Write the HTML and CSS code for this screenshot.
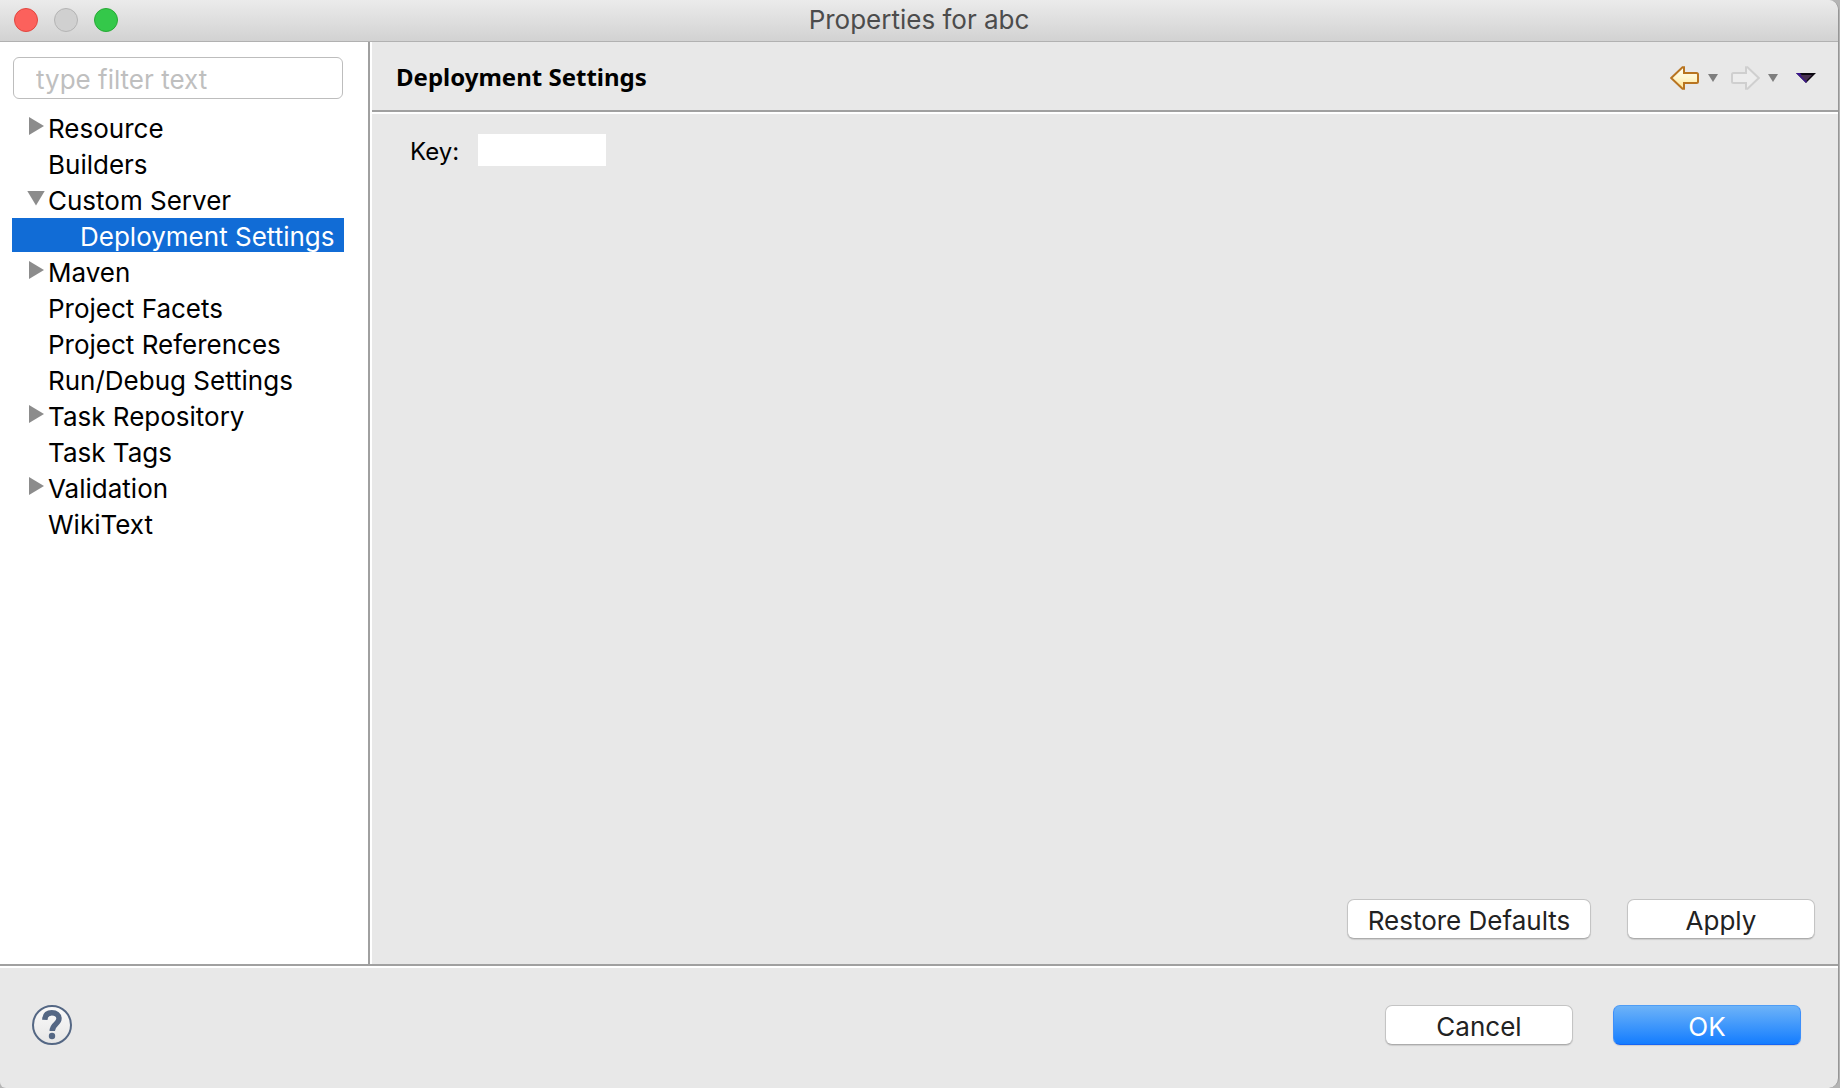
FILE: index.html
```html
<!DOCTYPE html>
<html lang="en">
<head>
<meta charset="utf-8">
<title>Properties for abc</title>
<link rel="stylesheet" href="styles.css">
</head>
<body>
<div class="window">
  <header class="titlebar">
    <div class="lights">
      <button class="light light-close" type="button" aria-label="Close"></button>
      <button class="light light-minimize" type="button" aria-label="Minimize" disabled></button>
      <button class="light light-zoom" type="button" aria-label="Zoom"></button>
    </div>
    <h1 class="title">Properties for abc</h1>
  </header>

  <div class="main">
    <nav class="sidebar">
      <input class="filter" type="text" placeholder="type filter text" aria-label="Filter">
      <ul class="tree">
        <li class="node closed">Resource</li>
        <li class="node">Builders</li>
        <li class="node open">Custom Server</li>
        <li class="node child selected">Deployment Settings</li>
        <li class="node closed">Maven</li>
        <li class="node">Project Facets</li>
        <li class="node">Project References</li>
        <li class="node">Run/Debug Settings</li>
        <li class="node closed">Task Repository</li>
        <li class="node">Task Tags</li>
        <li class="node closed">Validation</li>
        <li class="node">WikiText</li>
      </ul>
    </nav>

    <section class="page">
      <div class="page-header">
        <h2 class="page-title">Deployment Settings</h2>
        <div class="toolbar">
          <button class="tool" type="button" aria-label="Back">
            <svg width="30" height="24" viewBox="0 0 30 24">
              <defs><linearGradient id="gold" x1="0" y1="0" x2="0" y2="1"><stop offset="0" stop-color="#fffef4"/><stop offset=".5" stop-color="#fff6cf"/><stop offset="1" stop-color="#ffe28c"/></linearGradient></defs>
              <path d="M1.2 12 L12.5 1.2 H14 V7 H26.5 Q28 7 28 8.500 V15.500 Q28 17 26.500 17 H14 V22.800 H12.500 Z" fill="url(#gold)" stroke="#b87420" stroke-width="2"/>
            </svg>
          </button>
          <button class="tool" type="button" aria-label="Back history">
            <svg width="10" height="8" viewBox="0 0 10 8"><path d="M0 0H10L5 8Z" fill="#7e7e7e"/></svg>
          </button>
          <button class="tool tool-forward" type="button" aria-label="Forward" disabled>
            <svg width="30" height="24" viewBox="0 0 30 24">
              <path d="M28.800 12 L17.500 1.200 H16 V7 H3.500 Q2 7 2 8.500 V15.500 Q2 17 3.500 17 H16 V22.800 H17.500 Z" fill="#ededed" stroke="#cfcfcf" stroke-width="2"/>
            </svg>
          </button>
          <button class="tool" type="button" aria-label="Forward history">
            <svg width="10" height="8" viewBox="0 0 10 8"><path d="M0 0H10L5 8Z" fill="#7e7e7e"/></svg>
          </button>
          <button class="tool tool-menu" type="button" aria-label="View menu">
            <svg width="20" height="10" viewBox="0 0 20 10">
              <path d="M0 0H20L10 10Z" fill="#0c0810"/><path d="M0 0H4L11 8L10 10Z" fill="#3b1590"/><path d="M4 2H16L10 8Z" fill="#47304f"/>
            </svg>
          </button>
        </div>
      </div>
      <div class="page-body">
        <label class="key-label" for="key">Key:</label>
        <input class="key-input" id="key" type="text">
      </div>
      <div class="page-actions">
        <button class="button button-wide" type="button">Restore Defaults</button>
        <button class="button" type="button">Apply</button>
      </div>
    </section>
  </div>

  <footer class="footer">
    <button class="help" type="button" aria-label="Help">
      <svg width="40" height="40" viewBox="0 0 40 40">
        <defs><linearGradient id="disc" x1="0" y1="0" x2="0" y2="1"><stop offset="0" stop-color="#fafafa"/><stop offset="1" stop-color="#e6e6e6"/></linearGradient></defs>
        <circle cx="20" cy="20" r="19" fill="url(#disc)" stroke="#546784" stroke-width="2"/>
        <path d="M12.800 14.800 C13 9.800 15.600 7.800 19.800 7.800 C24.200 7.800 27 10 27 13.600 C27 19.200 20.200 18.800 20.200 26" fill="none" stroke="#546784" stroke-width="5.400"/>
        <circle cx="20" cy="31" r="3.200" fill="#546784"/>
      </svg>
    </button>
    <div class="footer-actions">
      <button class="button" type="button">Cancel</button>
      <button class="button button-primary" type="button">OK</button>
    </div>
  </footer>
</div>
</body>
</html>
```
FILE: styles.css
```css
* { box-sizing: border-box; }

body {
  margin: 0;
  background: #b4b4b4;
  color: #000;
  font-family: Inter, "Liberation Sans", sans-serif;
  font-size: 26px;
}

button, input { font: inherit; color: inherit; }

.window {
  display: flex;
  flex-direction: column;
  min-height: 100vh;
  margin-right: 1px;
  border-right: 1px solid #969696;
  border-radius: 0 10px 10px 6px;
  background: #e8e8e8;
  overflow: hidden;
}

.titlebar {
  display: grid;
  grid-template-columns: 1fr auto 1fr;
  align-items: center;
  height: 42px;
  padding: 0 14px 2px;
  background: linear-gradient(#ebebeb, #d2d2d2);
  border-bottom: 1px solid #b1b1b1;
}

.lights { display: flex; gap: 16px; }

.light {
  width: 24px;
  height: 24px;
  padding: 0;
  border: 1px solid;
  border-radius: 50%;
}
.light-close { background: #fc615c; border-color: #e2463f; }
.light-minimize { background: #d0d0d0; border-color: #b4b4b4; }
.light-zoom { background: #34c84a; border-color: #27aa35; }

.title {
  margin: 0;
  font-size: 26px;
  font-weight: 400;
  line-height: 38px;
  color: #4c4c4c;
}

.main { display: flex; flex: 1; }

.sidebar {
  width: 370px;
  padding: 15px 24px 0 12px;
  background: #fff;
  border-right: 2px solid #a0a0a0;
}

.filter {
  display: block;
  width: calc(100% - 2px);
  height: 42px;
  margin: 0 1px;
  padding: 2px 22px 0;
  border: 1px solid #bdbdbd;
  border-radius: 6px;
  background: #fff;
  outline: none;
}
.filter::placeholder { color: #bfbfbf; opacity: 1; }

.tree {
  display: flex;
  flex-direction: column;
  gap: 2px;
  margin: 11px 0 0;
  padding: 0;
  list-style: none;
}

.node {
  display: flex;
  align-items: center;
  height: 34px;
  padding: 4px 0 0 36px;
  line-height: 30px;
  white-space: nowrap;
}
.closed, .open { padding-left: 16px; }
.closed::before, .open::before {
  content: "";
  flex: none;
  margin-bottom: 6px;
  background: #8c8c8c;
}
.closed::before {
  width: 16px;
  height: 18px;
  margin-left: 1px;
  margin-right: 3px;
  clip-path: polygon(0 0, 15px 9px, 0 18px);
}
.open::before {
  width: 18px;
  height: 15px;
  margin-left: -1px;
  margin-right: 3px;
  clip-path: polygon(0 0, 18px 0, 9px 15px);
}
.child { padding-left: 68px; }
.selected { background: #116cd6; color: #fff; }

.page {
  display: flex;
  flex: 1;
  flex-direction: column;
  border-left: 2px solid #fff;
}

.page-header {
  display: flex;
  align-items: center;
  justify-content: space-between;
  height: 70px;
  padding: 2px 22px 0 24px;
  border-bottom: 2px solid #a0a0a0;
}

.page-title {
  margin: 0;
  font-family: "Noto Sans", "Open Sans", sans-serif;
  font-size: 24px;
  font-weight: 700;
  line-height: 32px;
}

.toolbar { display: flex; align-items: center; gap: 8px; padding-top: 2px; }
.tool { display: flex; padding: 0; border: 0; background: none; }
.tool-forward { margin-left: 4px; }
.tool-menu { margin-left: 10px; }

.page-body {
  display: flex;
  flex: 1;
  align-items: flex-start;
  gap: 19px;
  padding: 20px 38px;
  border-top: 2px solid #fff;
}
.key-label { font-size: 24px; line-height: 36px; }
.key-input {
  width: 128px;
  height: 32px;
  padding: 0 6px;
  border: 0;
  background: #fff;
  outline: none;
}

.page-actions {
  display: flex;
  justify-content: flex-end;
  gap: 36px;
  padding: 0 23px 25px;
}

.button {
  width: 188px;
  height: 40px;
  padding: 4px 0 0;
  border: 1px solid #c4c4c4;
  border-bottom-color: #acacac;
  border-radius: 7px;
  background: #fff;
  color: #222;
  line-height: 34px;
  box-shadow: 0 1px 1px rgba(0, 0, 0, 0.12);
}
.button-wide { width: 244px; }
.button-primary {
  border-color: #4f9df5 #3d8ffa #1565f5;
  background: linear-gradient(#6db3f8, #147dff);
  color: #fff;
}

.footer {
  display: flex;
  align-items: center;
  justify-content: space-between;
  height: 124px;
  padding: 0 37px 4px 32px;
  border-top: 2px solid #a0a0a0;
  box-shadow: inset 0 2px #fff;
}
.help { display: flex; padding: 0; border: 0; background: none; }
.footer-actions { display: flex; gap: 40px; }
```
